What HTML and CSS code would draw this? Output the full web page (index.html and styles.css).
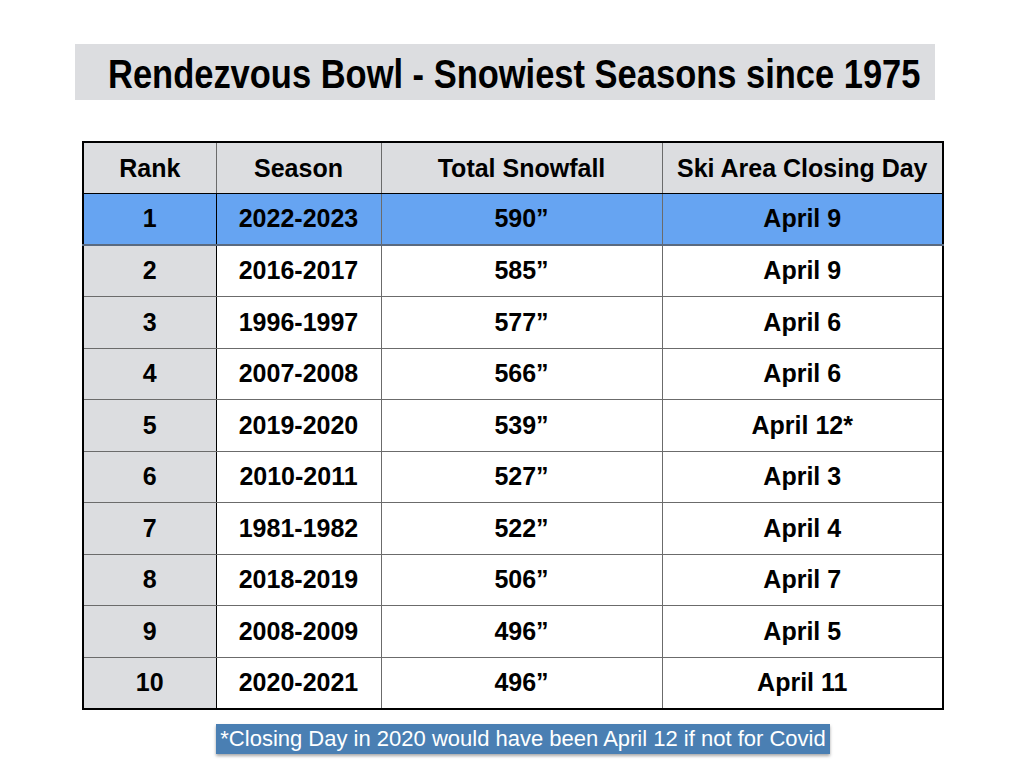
FILE: index.html
```html
<!DOCTYPE html>
<html>
<head>
<meta charset="utf-8">
<link rel="stylesheet" href="styles.css">
</head>
<body>
<div class="slide">
  <div class="title-bar"><h1 class="title">Rendezvous Bowl - Snowiest Seasons since 1975</h1></div>
  <table class="snow">
    <colgroup>
      <col class="c-rank"><col class="c-season"><col class="c-total"><col class="c-close">
    </colgroup>
    <thead>
      <tr><th>Rank</th><th>Season</th><th>Total Snowfall</th><th>Ski Area Closing Day</th></tr>
    </thead>
    <tbody>
      <tr class="top"><td class="rank">1</td><td>2022-2023</td><td>590”</td><td>April 9</td></tr>
      <tr><td class="rank">2</td><td>2016-2017</td><td>585”</td><td>April 9</td></tr>
      <tr><td class="rank">3</td><td>1996-1997</td><td>577”</td><td>April 6</td></tr>
      <tr><td class="rank">4</td><td>2007-2008</td><td>566”</td><td>April 6</td></tr>
      <tr><td class="rank">5</td><td>2019-2020</td><td>539”</td><td>April 12*</td></tr>
      <tr><td class="rank">6</td><td>2010-2011</td><td>527”</td><td>April 3</td></tr>
      <tr><td class="rank">7</td><td>1981-1982</td><td>522”</td><td>April 4</td></tr>
      <tr><td class="rank">8</td><td>2018-2019</td><td>506”</td><td>April 7</td></tr>
      <tr><td class="rank">9</td><td>2008-2009</td><td>496”</td><td>April 5</td></tr>
      <tr><td class="rank">10</td><td>2020-2021</td><td>496”</td><td>April 11</td></tr>
    </tbody>
  </table>
  <div class="note">*Closing Day in 2020 would have been April 12 if not for Covid</div>
</div>
</body>
</html>
```
FILE: styles.css
```css
html, body {
  margin: 0;
  padding: 0;
  background: #ffffff;
}
.slide {
  width: 1024px;
  height: 768px;
  padding-top: 44px;
  box-sizing: border-box;
  display: flex;
  flex-direction: column;
  align-items: flex-start;
  font-family: "Liberation Sans", Arial, sans-serif;
  color: #000;
}
.title-bar {
  margin-left: 75px;
  width: 860px;
  height: 56px;
  background: #dcdde0;
  display: flex;
  align-items: center;
  padding-left: 33px;
  padding-top: 4px;
  box-sizing: border-box;
  overflow: hidden;
}
.title {
  margin: 0;
  font-family: "Liberation Sans", Arial, sans-serif;
  font-weight: bold;
  font-size: 40px;
  line-height: 1;
  white-space: nowrap;
  transform: scaleX(0.862);
  transform-origin: left center;
}
.snow {
  margin-top: 41px;
  margin-left: 82px;
  width: 860px;
  border-collapse: collapse;
  table-layout: fixed;
  border: 2px solid #000;
}
.c-rank { width: 133px; }
.c-season { width: 165px; }
.c-total { width: 281px; }
.c-close { width: 281px; }
.snow th, .snow td {
  font-weight: bold;
  font-size: 25px;
  text-align: center;
  padding: 0;
  border: 1px solid #6b6b6b;
  height: 50.5px;
}
.snow th {
  background: #dcdde0;
  height: 50px;
  border-bottom: 1px solid #000;
}
.snow td.rank {
  background: #dcdde0;
  border-right: 1px solid #000;
}
.snow tr.top td {
  background: #66a4f2;
  height: 49.5px;
  border-bottom: 2px solid #5a6a80;
}
.note {
  margin-top: 14px;
  margin-left: 216px;
  width: 614px;
  height: 30px;
  background: #4a7fb3;
  color: #fff;
  font-family: "Liberation Sans", Arial, sans-serif;
  font-size: 22px;
  line-height: 30px;
  text-align: center;
  white-space: nowrap;
  box-shadow: 0 2px 3px rgba(0,0,0,0.35);
}
```
